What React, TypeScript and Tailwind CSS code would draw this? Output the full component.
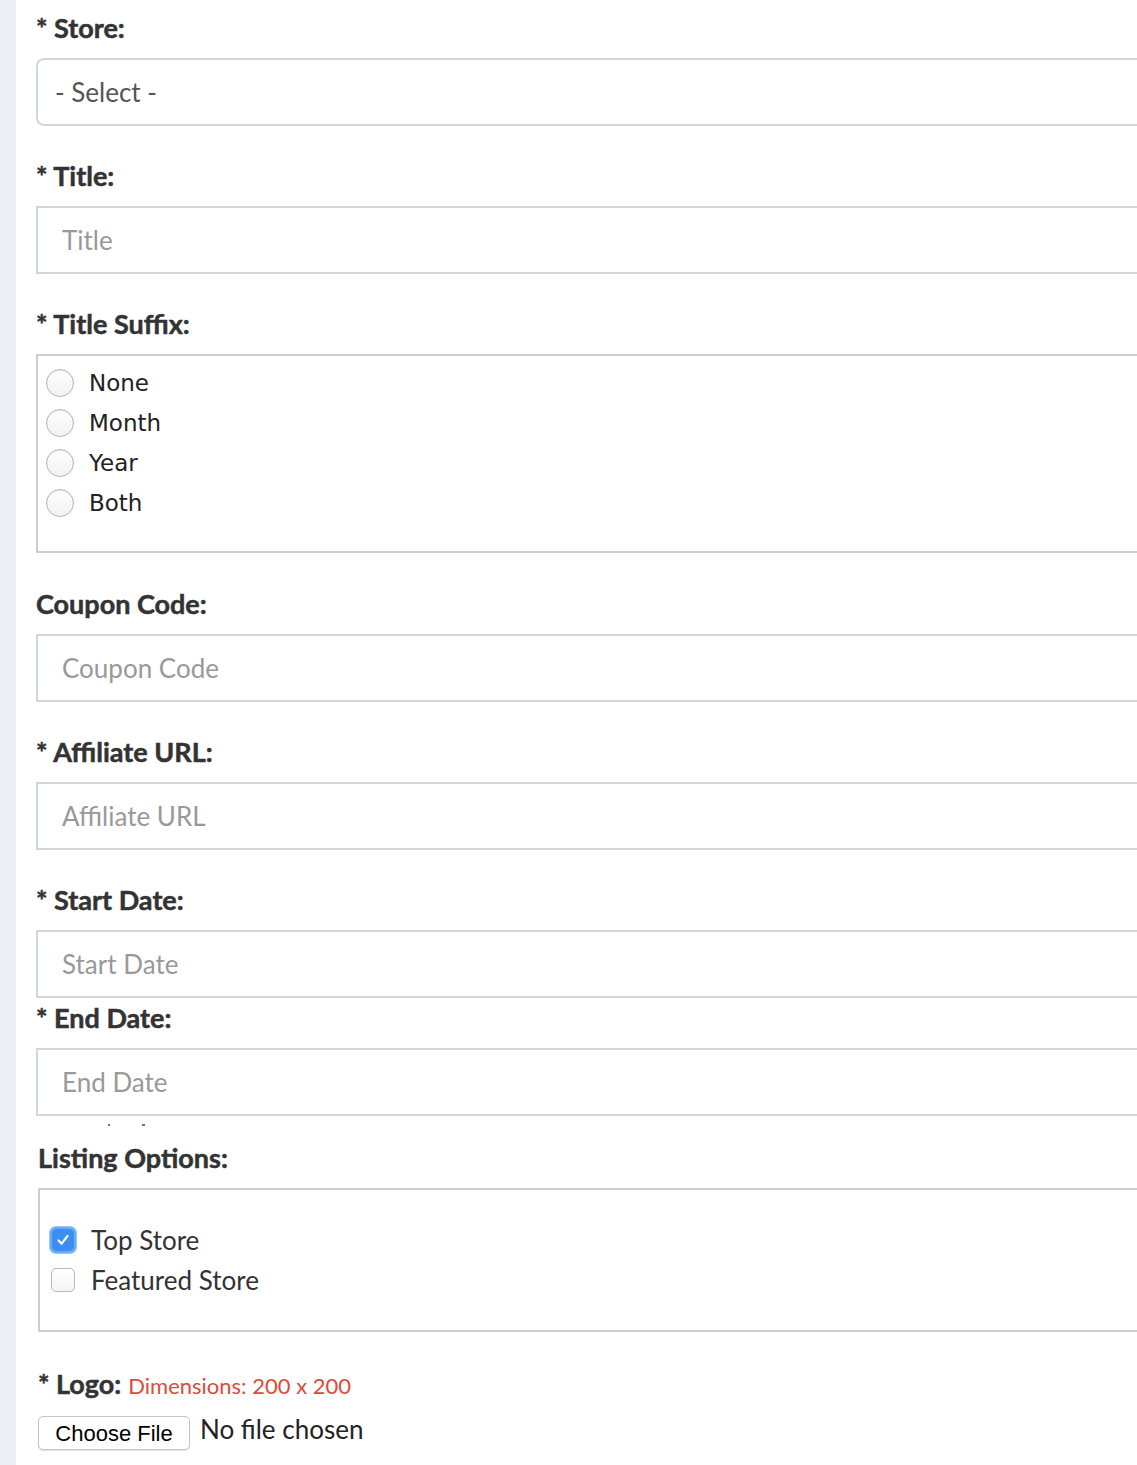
import React from "react";

const SANS = "font-['Lato','Noto_Sans',sans-serif]";
const BOLD = "text-[27px] leading-[36px] font-bold text-[#333] [-webkit-text-stroke:0.5px_#333]";

function Label({ children, className = "" }: { children: React.ReactNode; className?: string }) {
  return <div className={`${BOLD} ${SANS} ${className}`}>{children}</div>;
}

function Input({ placeholder, rounded = false }: { placeholder: string; rounded?: boolean }) {
  return (
    <div
      className={`h-[68px] box-border border-2 border-[#d2d6de] bg-white flex items-center ${rounded ? "rounded-[8px] pl-[17px] text-[#555]" : "pl-[24px] text-[#999]"} text-[26px] ${SANS}`}
    >
      {placeholder}
    </div>
  );
}

function Radio({ label }: { label: string }) {
  return (
    <div className="h-[40px] flex items-center">
      <span className="w-[28px] h-[28px] rounded-full border border-[#b5b5b5] bg-gradient-to-b from-white to-[#f2f2f2] shadow-[inset_0_1px_1px_rgba(0,0,0,0.08)] shrink-0" />
      <span className="ml-[15px] text-[23px] text-[#222] font-['DejaVu_Sans',sans-serif]">{label}</span>
    </div>
  );
}

function Check({ label, checked }: { label: string; checked?: boolean }) {
  return (
    <div className="h-[40px] flex items-center">
      {checked ? (
        <span className="ml-[1px] w-[26px] h-[26px] rounded-[6px] bg-[#6aabf8] flex items-center justify-center shrink-0 shadow-[0_0_0_1px_#9ac7fb]">
          <span className="w-[22px] h-[22px] rounded-[5px] bg-[#3b8df0] flex items-center justify-center">
            <svg width="16" height="16" viewBox="0 0 16 16">
              <path d="M3.5 8.5 L6.6 11.6 L12.5 4" fill="none" stroke="white" strokeWidth="2.2" strokeLinecap="round" strokeLinejoin="round" />
            </svg>
          </span>
        </span>
      ) : (
        <span className="ml-[2px] w-[24px] h-[24px] rounded-[5px] border border-[#b8b8b8] bg-gradient-to-b from-white to-[#f4f4f4] shrink-0" />
      )}
      <span className={`${checked ? "ml-[15px]" : "ml-[16px]"} text-[26px] text-[#333] ${SANS}`}>{label}</span>
    </div>
  );
}

export default function App() {
  return (
    <div className="w-[1137px] h-[1465px] overflow-hidden bg-white flex">
      <div className="w-[16px] shrink-0 bg-[#ecf0f5]" />
      <div className="w-[1200px] shrink-0 pl-[20px] pt-[10px]">
        <Label>* Store:</Label>
        <div className="mt-[12px]">
          <Input placeholder="- Select -" rounded />
        </div>

        <Label className="mt-[32px]">* Title:</Label>
        <div className="mt-[12px]">
          <Input placeholder="Title" />
        </div>

        <Label className="mt-[32px]">* Title Suffix:</Label>
        <div className="mt-[12px] h-[199px] box-border border-2 border-[#cdcdcd] pl-[8px] pt-[7px]">
          <Radio label="None" />
          <Radio label="Month" />
          <Radio label="Year" />
          <Radio label="Both" />
        </div>

        <Label className="mt-[33px]">Coupon Code:</Label>
        <div className="mt-[12px]">
          <Input placeholder="Coupon Code" />
        </div>

        <Label className="mt-[32px]">* Affiliate URL:</Label>
        <div className="mt-[12px]">
          <Input placeholder="Affiliate URL" />
        </div>

        <Label className="mt-[32px]">* Start Date:</Label>
        <div className="mt-[12px]">
          <Input placeholder="Start Date" />
        </div>

        <Label className="mt-[2px]">* End Date:</Label>
        <div className="mt-[12px]">
          <Input placeholder="End Date" />
        </div>

        <div className="h-[24px] relative">
          <span className="absolute left-[72px] top-[8px] w-[2px] h-[2px] bg-[#777]" />
          <span className="absolute left-[106px] top-[8px] w-[3px] h-[2px] bg-[#777]" />
        </div>

        <div className="pl-[2px]">
          <Label>Listing Options:</Label>
          <div className="mt-[12px] h-[144px] box-border border-2 border-[#cdcdcd] pl-[9px] pt-[30px]">
            <Check label="Top Store" checked />
            <Check label="Featured Store" />
          </div>

          <div className="mt-[34px] flex items-baseline">
            <span className={`${BOLD} ${SANS}`}>* Logo:</span>
            <span className={`ml-[7px] text-[22px] text-[#dd4b39] ${SANS}`}>Dimensions: 200 x 200</span>
          </div>

          <div className="mt-[14px] flex items-center">
            <div className="h-[34px] w-[152px] box-border border border-[#c4c4c4] rounded-[5px] bg-white shadow-[0_1px_1px_rgba(0,0,0,0.12)] flex items-center justify-center text-[22px] text-black font-['Liberation_Sans',sans-serif]">
              Choose File
            </div>
            <span className={`ml-[10px] -mt-[8px] text-[26px] text-[#222] ${SANS}`}>No file chosen</span>
          </div>
        </div>
      </div>
    </div>
  );
}
